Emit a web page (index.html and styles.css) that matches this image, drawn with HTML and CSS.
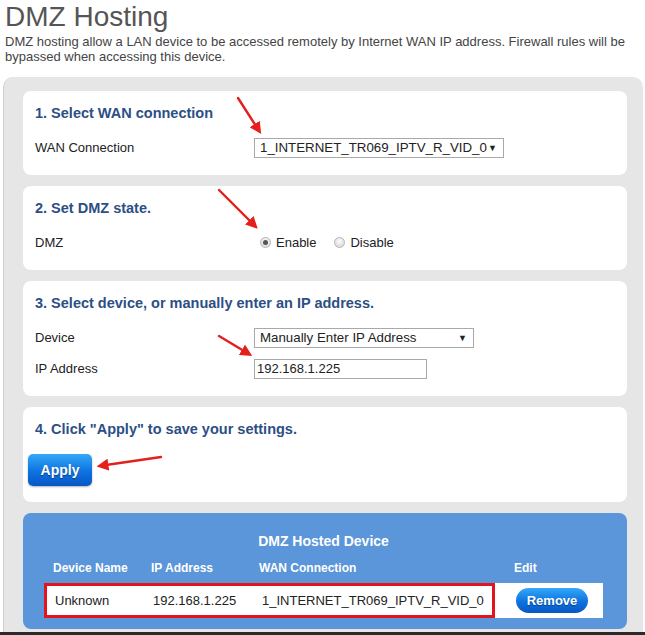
FILE: index.html
```html
<!DOCTYPE html>
<html lang="en">
<head>
    <meta charset="UTF-8">
    <meta name="viewport" content="width=device-width, initial-scale=1.0">
    <title>DMZ Hosting</title>
    <link rel="stylesheet" href="styles.css">
</head>
<body>

<div class="page">
    <h1 class="title">DMZ Hosting</h1>
    <p class="intro">DMZ hosting allow a LAN device to be accessed remotely by Internet WAN IP address. Firewall rules will be bypassed when accessing this device.</p>

    <div class="panel">
        <div class="card">
            <h3>1. Select WAN connection</h3>
            <div class="row">
                <span class="label">WAN Connection</span>
                <div class="select wide"><span>1_INTERNET_TR069_IPTV_R_VID_0</span><span class="caret">&#9660;</span></div>
            </div>
        </div>

        <div class="card">
            <h3>2. Set DMZ state.</h3>
            <div class="row">
                <span class="label">DMZ</span>
                <div class="radios">
                    <span class="radio checked"></span><span class="radio-text">Enable</span>
                    <span class="radio"></span><span class="radio-text">Disable</span>
                </div>
            </div>
        </div>

        <div class="card">
            <h3>3. Select device, or manually enter an IP address.</h3>
            <div class="row">
                <span class="label">Device</span>
                <div class="select"><span>Manually Enter IP Address</span><span class="caret">&#9660;</span></div>
            </div>
            <div class="row">
                <span class="label">IP Address</span>
                <div class="text-input">192.168.1.225</div>
            </div>
        </div>

        <div class="card">
            <h3>4. Click "Apply" to save your settings.</h3>
            <button class="btn apply">Apply</button>
        </div>

        <div class="hosted">
            <h4>DMZ Hosted Device</h4>
            <div class="thead">
                <span class="c1">Device Name</span>
                <span class="c2">IP Address</span>
                <span class="c3">WAN Connection</span>
                <span class="c4">Edit</span>
            </div>
            <div class="trow">
                <div class="picked">
                    <span class="d1">Unknown</span>
                    <span class="d2">192.168.1.225</span>
                    <span class="d3">1_INTERNET_TR069_IPTV_R_VID_0</span>
                </div>
                <div class="d4"><button class="btn remove">Remove</button></div>
            </div>
        </div>
    </div>
    <div class="cut"></div>

    <svg class="arrows" width="645" height="635" viewBox="0 0 645 635">
        <defs>
            <marker id="head" markerWidth="5" markerHeight="5" refX="1" refY="2.5" orient="auto" markerUnits="strokeWidth">
                <path d="M0,0 L5,2.5 L0,5 z" fill="#e3201b"/>
            </marker>
        </defs>
        <line x1="238" y1="98" x2="256" y2="126" marker-end="url(#head)"/>
        <line x1="219" y1="190" x2="251" y2="222" marker-end="url(#head)"/>
        <line x1="219" y1="336" x2="244" y2="351" marker-end="url(#head)"/>
        <line x1="161" y1="457" x2="106" y2="465" marker-end="url(#head)"/>
    </svg>
</div>

</body>
</html>
```

FILE: styles.css
```css
body {
    margin: 0;
    font-family: "Liberation Sans", Arial, sans-serif;
    color: #222;
    background: #fff;
}
.page {
    position: relative;
    width: 645px;
    height: 635px;
    overflow: hidden;
}
.title {
    margin: 0;
    padding-left: 5px;
    font-size: 28px;
    font-weight: normal;
    line-height: 33px;
    color: #555;
}
.intro {
    margin: 1px 0 0;
    padding: 0 5px;
    font-size: 13px;
    line-height: 15px;
    color: #444;
}
.panel {
    margin: 13px 0 0 3px;
    width: 640px;
    height: 555px;
    box-sizing: border-box;
    padding: 14px 16px 0 19px;
    background: #e6e6e6;
    border-left: 1px solid #cfcfcf;
    border-radius: 10px 10px 0 0;
    display: flex;
    flex-direction: column;
    gap: 11px;
}
.card {
    background: #fff;
    border-radius: 8px;
    padding: 13px 12px 12px;
}
.card h3 {
    margin: 0 0 10px;
    font-size: 14.5px;
    line-height: 18px;
    color: #2c4f85;
}
.row {
    display: grid;
    grid-template-columns: 219px 1fr;
    align-items: center;
    height: 31px;
    font-size: 13px;
}
.select {
    display: flex;
    justify-content: space-between;
    align-items: center;
    width: 220px;
    height: 20px;
    box-sizing: border-box;
    padding: 0 6px 0 5px;
    border: 1px solid #a9a9a9;
    font-size: 13.3px;
    color: #222;
}
.select.wide {
    width: 250px;
}
.caret {
    font-size: 9px;
    color: #222;
}
.text-input {
    width: 173px;
    height: 20px;
    box-sizing: border-box;
    padding: 0 2px;
    border: 1px solid #a9a9a9;
    font-size: 13px;
    line-height: 18px;
}
.radios {
    display: flex;
    align-items: center;
    padding-left: 6px;
}
.radio {
    width: 11px;
    height: 11px;
    box-sizing: border-box;
    border-radius: 50%;
    border: 1px solid #b5b5b5;
    background: radial-gradient(circle at 50% 35%, #fafafa, #d4d4d4);
    display: flex;
    align-items: center;
    justify-content: center;
}
.radio.checked::after {
    content: "";
    width: 5px;
    height: 5px;
    border-radius: 50%;
    background: #555;
}
.radio-text {
    margin: 0 18px 0 5px;
    font-size: 13px;
}
.btn {
    border: none;
    color: #fff;
    font-family: "Liberation Sans", Arial, sans-serif;
    font-weight: bold;
    text-shadow: 0 1px 1px rgba(0, 0, 0, 0.4);
    background: linear-gradient(#35a8f8, #0d72e0 55%, #0757c4);
    cursor: pointer;
}
.apply {
    display: block;
    margin: 16px 0 4px -7px;
    width: 64px;
    height: 32px;
    border-radius: 5px;
    font-size: 14px;
    box-shadow: 0 1px 2px rgba(0, 0, 0, 0.3);
}
.hosted {
    background: #5b95da;
    border-radius: 8px;
    padding: 19px 24px 11px 21px;
    color: #fff;
}
.hosted h4 {
    margin: 0;
    text-align: center;
    font-size: 14px;
    line-height: 18px;
}
.thead {
    display: flex;
    margin: 8px 0 5px;
    font-size: 12px;
    font-weight: bold;
    line-height: 20px;
}
.thead span {
    flex-shrink: 0;
    box-sizing: border-box;
    padding-left: 9px;
}
.c1 { width: 98px; }
.c2 { width: 108px; }
.c3 { width: 245px; }
.c4 { padding-left: 19px !important; }
.trow {
    display: flex;
    background: #fff;
    height: 35px;
    color: #222;
    font-size: 13px;
}
.picked {
    display: flex;
    align-items: center;
    flex-shrink: 0;
    width: 451px;
    box-sizing: border-box;
    border: 3px solid #e3141b;
}
.picked span {
    flex-shrink: 0;
    box-sizing: border-box;
    padding-left: 8px;
}
.d1 { width: 98px; }
.d2 { width: 109px; }
.d4 {
    display: flex;
    align-items: center;
    padding-left: 21px;
}
.remove {
    width: 72px;
    height: 25px;
    border-radius: 13px;
    font-size: 13px;
}
.cut {
    height: 3px;
    background: #2a2a2a;
}
.arrows {
    position: absolute;
    left: 0;
    top: 0;
    pointer-events: none;
}
.arrows line {
    stroke: #e3201b;
    stroke-width: 2.4;
    stroke-linecap: round;
}
```
